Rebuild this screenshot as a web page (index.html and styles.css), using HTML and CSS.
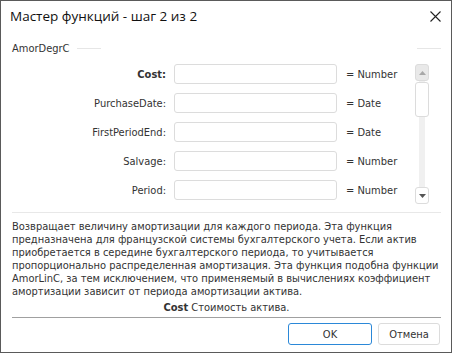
FILE: index.html
```html
<!DOCTYPE html>
<html lang="ru">
<head>
    <meta charset="UTF-8">
    <title>Мастер функций</title>
    <link rel="stylesheet" href="styles.css">
</head>
<body>
    <div class="dialog">
        <div class="titlebar">
            <span class="title">Мастер функций - шаг 2 из 2</span>
            <svg class="close" width="11" height="11" viewBox="0 0 11 11"><path d="M0.5 0.5L10.5 10.5M10.5 0.5L0.5 10.5" stroke="#222" stroke-width="1.1"/></svg>
        </div>

        <div class="groupHead">
            <span>AmorDegrC</span>
            <i class="rule"></i>
            <i class="gap"></i>
            <i class="rule"></i>
        </div>

        <div class="params">
            <div class="rows">
                <label class="bold">Cost:</label><div class="field"></div><span class="type">= Number</span>
                <label>PurchaseDate:</label><div class="field"></div><span class="type">= Date</span>
                <label>FirstPeriodEnd:</label><div class="field"></div><span class="type">= Date</span>
                <label>Salvage:</label><div class="field"></div><span class="type">= Number</span>
                <label>Period:</label><div class="field"></div><span class="type">= Number</span>
            </div>
            <div class="scrollbar">
                <div class="arrow up"><svg width="7" height="4" viewBox="0 0 7 4"><path d="M0 4L3.5 0L7 4Z" fill="#a8a8a8"/></svg></div>
                <div class="track"><div class="thumb"></div></div>
                <div class="arrow down"><svg width="7" height="4" viewBox="0 0 7 4"><path d="M0 0L3.5 4L7 0Z" fill="#555"/></svg></div>
            </div>
        </div>

        <div class="desc">
            Возвращает величину амортизации для каждого периода. Эта функция
            предназначена для французской системы бухгалтерского учета. Если актив
            приобретается в середине бухгалтерского периода, то учитывается
            пропорционально распределенная амортизация. Эта функция подобна функции
            AmorLinC, за тем исключением, что применяемый в вычислениях коэффициент
            амортизации зависит от периода амортизации актива.
        </div>
        <div class="argInfo"><b>Cost</b> Стоимость актива.</div>

        <div class="footer">
            <button type="button" class="btn ok">OK</button>
            <button type="button" class="btn">Отмена</button>
        </div>
    </div>
</body>
</html>
```

FILE: styles.css
```css
body{
    margin: 0;
    background: #fff;
}
.dialog{
    width: 452px;
    height: 353px;
    box-sizing: border-box;
    border: 1px solid #5a5a5a;
    background: #fff;
    display: flex;
    flex-direction: column;
    font-family: 'DejaVu Sans Condensed', 'DejaVu Sans', sans-serif;
    font-size: 11px;
    color: #333;
}
.titlebar{
    height: 30px;
    display: flex;
    align-items: center;
    justify-content: space-between;
    padding: 0 10px 0 9px;
}
.title{
    font-family: 'Open Sans', 'Noto Sans', sans-serif;
    font-size: 13.5px;
    color: #111;
}
.close{
    display: block;
}
.groupHead{
    display: flex;
    align-items: center;
    height: 16px;
    margin: 9px 10px 0 11px;
    color: #333;
}
.groupHead .rule{
    width: 24px;
    border-top: 1px solid #e6e6e6;
    margin-left: 7px;
}
.groupHead .gap{
    flex: 1;
}
.params{
    display: flex;
    margin-top: 8px;
    height: 140px;
}
.rows{
    display: grid;
    grid-template-columns: 165px 163px auto;
    grid-auto-rows: 20px;
    row-gap: 9px;
    column-gap: 8px;
    align-items: center;
    width: 414px;
}
.rows label{
    text-align: right;
}
.rows .bold{
    font-weight: bold;
}
.field{
    height: 20px;
    box-sizing: border-box;
    border: 1px solid #dcdcdc;
    border-radius: 3px;
    background: #fff;
}
.type{
    margin-left: 1px;
}
.scrollbar{
    width: 14px;
    display: flex;
    flex-direction: column;
    align-items: center;
}
.arrow{
    width: 14px;
    height: 17px;
    box-sizing: border-box;
    border: 1px solid #dcdcdc;
    border-radius: 3px;
    display: flex;
    align-items: center;
    justify-content: center;
    background: #fff;
}
.arrow.up{
    background: #e9e9e9;
}
.track{
    flex: 1;
    width: 6px;
    background: #f0f0f0;
    position: relative;
}
.thumb{
    position: absolute;
    left: -4px;
    top: 1px;
    width: 14px;
    height: 35px;
    box-sizing: border-box;
    border: 1px solid #dcdcdc;
    border-radius: 3px;
    background: #fff;
}
.desc{
    margin: 8px 10px 0 11px;
    border-top: 1px solid #e8e8e8;
    padding-top: 7px;
    line-height: 13px;
}
.argInfo{
    text-align: center;
    margin: 3px 10px 0 11px;
    padding-bottom: 3px;
    border-bottom: 1px solid #a0a0a0;
}
.footer{
    display: flex;
    justify-content: flex-end;
    gap: 6px;
    padding: 5px 11px 0 0;
}
.btn{
    height: 22px;
    width: 62px;
    font-family: 'DejaVu Sans Condensed', 'DejaVu Sans', sans-serif;
    font-size: 11px;
    color: #333;
    background: #fff;
    border: 1px solid #dcdcdc;
    border-radius: 3px;
}
.btn.ok{
    width: 84px;
    border-color: #2b88d8;
}
```
